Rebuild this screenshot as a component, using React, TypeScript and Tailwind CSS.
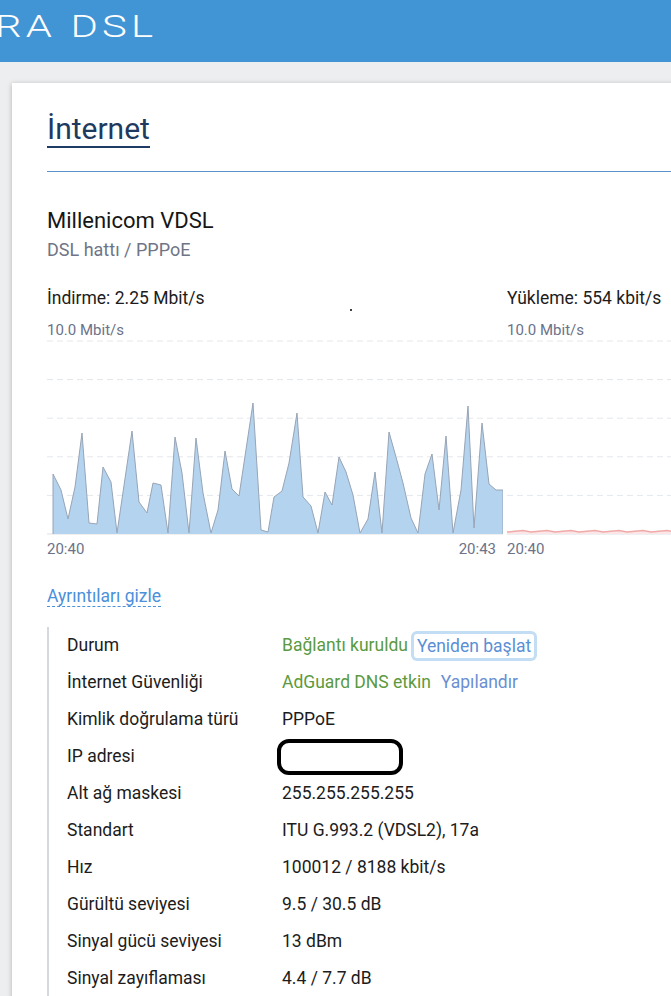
import React from "react";

const downPoints: [number, number][] = [
    [53, 534], [53, 474], [61, 490], [68, 519], [75, 487], [82, 433], [89, 523], [97, 524],
    [103, 467], [111, 482], [117, 533], [132, 431], [139, 502], [147, 513], [153, 483], [161, 485],
    [168, 533], [175, 437], [182, 473], [189, 533], [196, 438], [203, 493], [211, 533], [218, 510],
    [225, 451], [232, 489], [239, 496], [253, 403], [261, 530], [268, 532], [274, 497], [282, 491],
    [289, 463], [297, 413], [303, 497], [311, 506], [318, 533], [325, 492], [332, 505], [339, 457],
    [346, 472], [353, 495], [360, 533], [368, 519], [375, 472], [382, 533], [389, 432], [396, 457],
    [403, 483], [411, 518], [418, 533], [425, 474], [432, 454], [439, 510], [446, 436], [453, 533],
    [461, 490], [468, 406], [474, 528], [482, 423], [489, 484], [496, 490], [503, 490], [503, 534],
];

// page coords -> svg coords (chart box starts at x=47, y=336)
const downPath = downPoints
    .map(([x, y], i) => `${i === 0 ? "M" : "L"}${x - 47} ${y - 336}`)
    .join(" ");

const upLine = [0, 8, 16, 24, 32, 40, 48, 56, 64, 72, 80, 88, 96, 104, 112, 120, 128, 136, 144, 152, 160, 168, 176, 184, 192, 200, 208]
    .map((x, i) => `${i === 0 ? "M" : "L"}${x} ${196 - ((i * 7) % 3) * 0.7}`)
    .join(" ");

const gridY = [5, 43.6, 82.2, 120.8, 159.4];

function Grid({ width }: { width: number }) {
    return (
        <>
            {gridY.map((y) => (
                <line key={y} x1={0} x2={width} y1={y} y2={y} stroke="#e4e7eb" strokeWidth={1} strokeDasharray="6 4" />
            ))}
            <line x1={0} x2={width} y1={198} y2={198} stroke="#dde1e6" strokeWidth={1} />
        </>
    );
}

const rows: { label: string; value: React.ReactNode }[] = [
    {
        label: "Durum",
        value: (
            <span className="flex items-center">
                <span className="text-[#5b9a40]">Bağlantı kuruldu</span>
                <span className="ml-[6px] px-[3px] rounded-[3px] text-[#5a8fd6] ring-[3px] ring-[#c3ddf5] leading-[24px]">
                    Yeniden başlat
                </span>
            </span>
        ),
    },
    {
        label: "İnternet Güvenliği",
        value: (
            <span className="flex items-center gap-[10px]">
                <span className="text-[#5b9a40]">AdGuard DNS etkin</span>
                <span className="text-[#6a8fd2]">Yapılandır</span>
            </span>
        ),
    },
    { label: "Kimlik doğrulama türü", value: "PPPoE" },
    {
        label: "IP adresi",
        value: <span className="block -ml-[5px] w-[126px] h-[36px] border-[4px] border-black rounded-[12px]" />,
    },
    { label: "Alt ağ maskesi", value: "255.255.255.255" },
    { label: "Standart", value: "ITU G.993.2 (VDSL2), 17a" },
    { label: "Hız", value: "100012 / 8188 kbit/s" },
    { label: "Gürültü seviyesi", value: "9.5 / 30.5 dB" },
    { label: "Sinyal gücü seviyesi", value: "13 dBm" },
    { label: "Sinyal zayıflaması", value: "4.4 / 7.7 dB" },
];

export default function App() {
    return (
        <div className="w-[671px] h-[996px] overflow-hidden bg-[#edeef0] font-['Roboto',sans-serif]">
            <header className="h-[62px] bg-[#4295d5] flex items-center overflow-hidden">
                <span className="-ml-[5px] -mt-[9px] origin-left scale-x-[1.35] text-white text-[31px] leading-none font-light tracking-[0.1em] whitespace-nowrap">
                    RA DSL
                </span>
            </header>

            <div className="pt-[21px] pl-[12px]">
                <div className="w-[1000px] bg-white shadow-[0_1px_5px_rgba(0,0,0,0.25)] pl-[35px] pt-[29px] pb-[40px]">
                    <h1 className="inline-block text-[30px] leading-[34px] text-[#1f3a5f] border-b-2 border-[#1f3a63]">
                        İnternet
                    </h1>
                    <div className="mt-[23px] h-px bg-[#5a93cf]" />

                    <div className="mt-[35px] text-[22px] leading-[28px] text-[#161616]">Millenicom VDSL</div>
                    <div className="mt-[3px] text-[18px] leading-[24px] text-[#6f7586]">DSL hattı / PPPoE</div>

                    <div className="mt-[24px] flex gap-[4px]">
                        <div className="w-[456px] relative">
                            <div className="text-[17.5px] leading-[24px] text-[#1c1c1c]">İndirme: 2.25 Mbit/s</div>
                            <span className="absolute left-[303px] top-[23px] w-[2px] h-[2px] bg-black rounded-full" />
                            <div className="mt-[10px] text-[15px] leading-[20px] text-[#6b7289]">10.0 Mbit/s</div>
                            <svg width={456} height={200} className="block -mt-[4px]">
                                <Grid width={456} />
                                <path d={downPath} fill="#b3d3ee" stroke="#97a4b6" strokeWidth={1} strokeLinejoin="round" />
                            </svg>
                            <div className="mt-[3px] flex justify-between pr-[7px] text-[15px] leading-[20px] text-[#6b7289]">
                                <span>20:40</span>
                                <span>20:43</span>
                            </div>
                        </div>
                        <div className="w-[456px]">
                            <div className="text-[17.5px] leading-[24px] text-[#1c1c1c]">Yükleme: 554 kbit/s</div>
                            <div className="mt-[10px] text-[15px] leading-[20px] text-[#6b7289]">10.0 Mbit/s</div>
                            <svg width={456} height={200} className="block -mt-[4px]">
                                <Grid width={456} />
                                <path d={`${upLine} L208 198 L0 198 Z`} fill="#fbe7e7" stroke="none" />
                                <path d={upLine} fill="none" stroke="#f0a9a9" strokeWidth={1.5} />
                            </svg>
                            <div className="mt-[3px] text-[15px] leading-[20px] text-[#6b7289]">20:40</div>
                        </div>
                    </div>

                    <div className="mt-[25px]">
                        <span className="text-[17.5px] leading-[24px] text-[#4a90da] border-b border-dashed border-[#4a90da]">
                            Ayrıntıları gizle
                        </span>
                    </div>

                    <div className="mt-[18px] border-l-2 border-[#d5d8dd] pl-[18px] text-[17.5px] text-[#1c1c1c]">
                        {rows.map((r) => (
                            <div key={r.label} className="h-[37px] flex items-center">
                                <span className="w-[215px] shrink-0">{r.label}</span>
                                <span>{r.value}</span>
                            </div>
                        ))}
                    </div>
                </div>
            </div>
        </div>
    );
}
